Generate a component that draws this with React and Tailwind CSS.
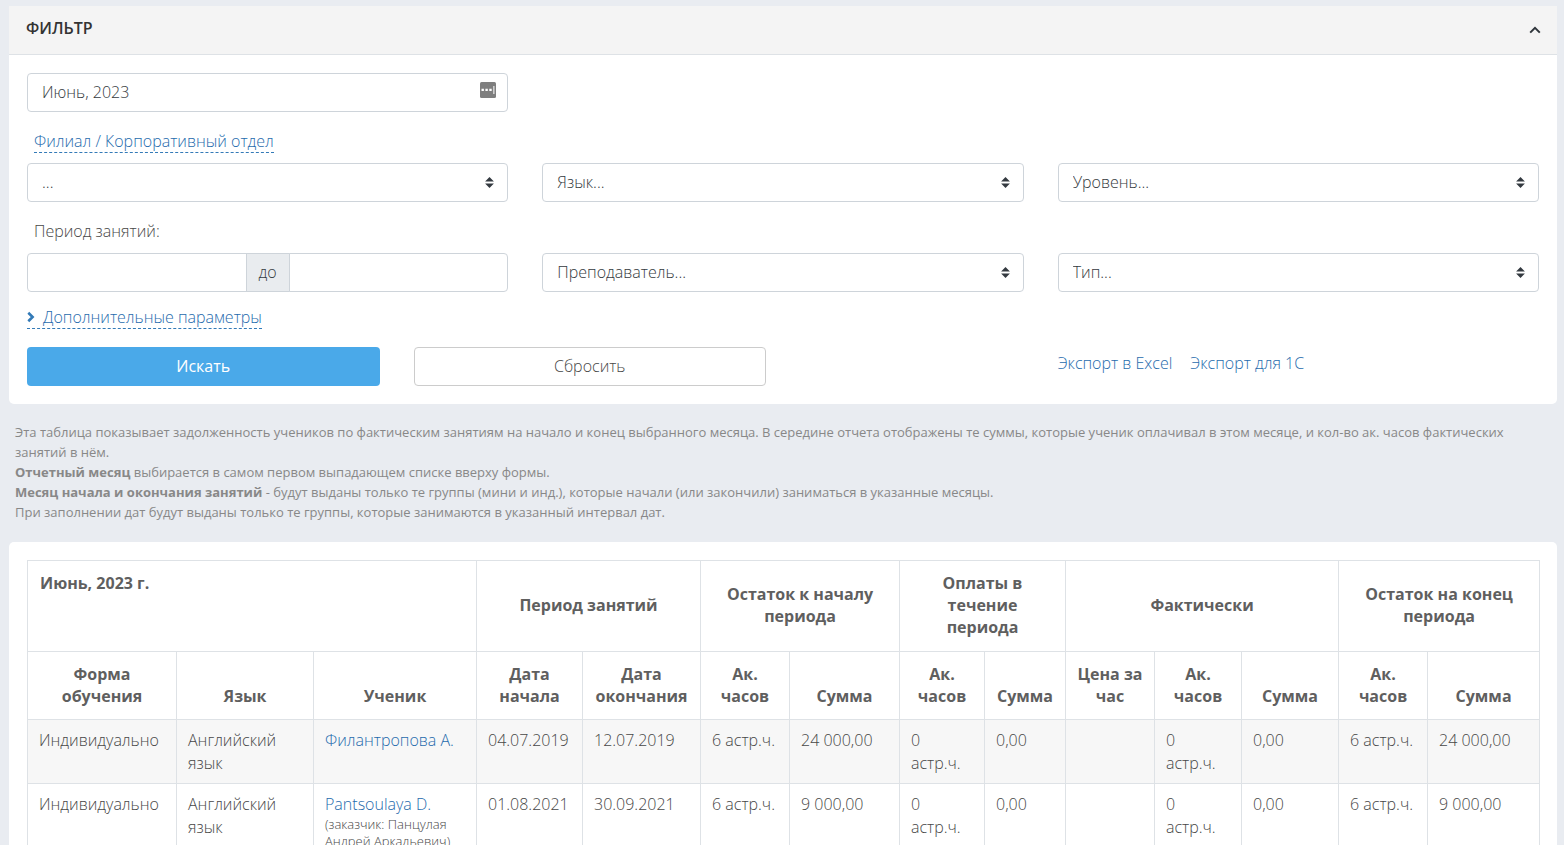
import { useState } from 'react';

const groups = [
  { title: 'Период занятий', span: 2 },
  { title: 'Остаток к началу периода', span: 2 },
  { title: 'Оплаты в течение периода', span: 2 },
  { title: 'Фактически', span: 3 },
  { title: 'Остаток на конец периода', span: 2 },
];

const columns = [
  { title: 'Форма обучения', width: 'w-[149px]' },
  { title: 'Язык', width: 'w-[137px]' },
  { title: 'Ученик', width: 'w-[163px]' },
  { title: 'Дата начала', width: 'w-[106px]' },
  { title: 'Дата окончания', width: 'w-[118px]' },
  { title: 'Ак. часов', width: 'w-[89px]' },
  { title: 'Сумма', width: 'w-[110px]' },
  { title: 'Ак. часов', width: 'w-[85px]' },
  { title: 'Сумма', width: 'w-[81px]' },
  { title: 'Цена за час', width: 'w-[89px]' },
  { title: 'Ак. часов', width: 'w-[87px]' },
  { title: 'Сумма', width: 'w-[97px]' },
  { title: 'Ак. часов', width: 'w-[89px]' },
  { title: 'Сумма', width: 'w-[112px]' },
];

const rows = [
  {
    student: 'Филантропова А.',
    values: ['04.07.2019', '12.07.2019', '6 астр.ч.', '24 000,00', '0 астр.ч.', '0,00', '', '0 астр.ч.', '0,00', '6 астр.ч.', '24 000,00'],
  },
  {
    student: 'Pantsoulaya D.',
    customer: '(заказчик: Панцулая Андрей Аркадьевич)',
    values: ['01.08.2021', '30.09.2021', '6 астр.ч.', '9 000,00', '0 астр.ч.', '0,00', '', '0 астр.ч.', '0,00', '6 астр.ч.', '9 000,00'],
  },
];

function SelectField({ label }) {
  return (
    <div className="relative">
      <select
        aria-label={label}
        className="block h-[39px] w-full appearance-none rounded border border-[#ced4da] bg-white px-3.5 pb-0.5 text-[#343a40]"
      >
        <option>{label}</option>
      </select>
      <svg className="pointer-events-none absolute top-[14px] right-3.5 h-[11px] w-[9px]" viewBox="0 0 4 5" aria-hidden="true">
        <path fill="#343a40" d="M2 0L0 2h4zm0 5L0 3h4z" />
      </svg>
    </div>
  );
}

function FilterPanel() {
  const [open, setOpen] = useState(true);

  return (
    <section className="rounded-b-[5px] bg-white">
      <header className="flex h-[49px] items-center justify-between border-b border-[#dee2e6] bg-[#f4f4f4] pr-3 pb-1 pl-[17px]">
        <h2 className="font-semibold text-[#333]">ФИЛЬТР</h2>
        <button type="button" aria-label="Свернуть фильтр" onClick={() => setOpen(!open)} className="p-1">
          <svg className="mt-1 h-2 w-3" viewBox="0 0 12 8" fill="none" stroke="#2f353b" strokeWidth="2" aria-hidden="true">
            <path d="M1.2 6.6L6 1.8l4.8 4.8" />
          </svg>
        </button>
      </header>

      {open && (
        <form className="p-[18px]" onSubmit={(e) => e.preventDefault()}>
          <div className="grid grid-cols-3 gap-x-[34px]">
            <div className="relative">
              <input
                aria-label="Отчетный месяц"
                defaultValue="Июнь, 2023"
                className="block h-[39px] w-full rounded border border-[#ced4da] bg-white px-3.5 pb-0.5 text-[#343a40]"
              />
              <svg className="absolute top-[9px] right-3 h-4 w-4" viewBox="0 0 16 16" aria-hidden="true">
                <rect width="16" height="16" rx="1.5" fill="#7f7f7f" />
                <path fill="#fff" d="M1.5 6.7h2.4v2.2H1.5zM5.4 6.7h2.4v2.2H5.4zM9.3 6.7h2.4v2.2H9.3z" />
                <path fill="#d0d0d0" d="M13 4h1.6v8H13z" />
              </svg>
            </div>

            <div className="col-span-3 flex h-[51px] items-center pt-2 pl-[7px]">
              <a href="#branch" className="border-b border-dashed border-[#337ab7] leading-[22px] text-[#1f6bad]">
                Филиал / Корпоративный отдел
              </a>
            </div>

            <SelectField label="..." />
            <SelectField label="Язык..." />
            <SelectField label="Уровень..." />

            <div className="col-span-3 flex h-[51px] items-center pt-1.5 pl-[7px]">
              <label htmlFor="date-from">Период занятий:</label>
            </div>

            <div className="flex h-[39px]">
              <input id="date-from" className="min-w-0 flex-1 rounded-l border border-[#ced4da] bg-white px-3.5" />
              <label htmlFor="date-to" className="-mx-px flex items-center border border-[#ced4da] bg-[#e9ecef] px-3 pb-0.5 text-[#343a40]">
                до
              </label>
              <input id="date-to" className="min-w-0 flex-1 rounded-r border border-[#ced4da] bg-white px-3.5" />
            </div>
            <SelectField label="Преподаватель..." />
            <SelectField label="Тип..." />
          </div>

          <div className="flex h-[55px] items-start pt-3.5">
            <a href="#more" className="flex items-center border-b border-dashed border-[#337ab7] leading-[22px] text-[#1f6bad]">
              <svg className="mr-2 h-3 w-2" viewBox="0 0 8 12" fill="none" stroke="#337ab7" strokeWidth="2.6" aria-hidden="true">
                <path d="M1.3 1.8L5.6 6l-4.3 4.2" />
              </svg>
              Дополнительные параметры
            </a>
          </div>

          <div className="grid grid-cols-12 gap-x-[34px]">
            <button type="submit" className="col-span-3 h-[39px] rounded bg-[#4aa9e9] pb-0.5 font-normal text-white">
              Искать
            </button>
            <button type="reset" className="col-span-3 h-[39px] rounded border border-[#ccc] bg-white pb-0.5">
              Сбросить
            </button>
            <div className="col-span-4 col-start-9 flex gap-[18px] pt-1 text-[#1f6bad]">
              <a href="#excel">Экспорт в Excel</a>
              <a href="#1c">Экспорт для 1С</a>
            </div>
          </div>
        </form>
      )}
    </section>
  );
}

function DebtTable() {
  return (
    <table className="w-full table-fixed border-collapse">
      <colgroup>
        {columns.map((c, i) => (
          <col key={i} className={c.width} />
        ))}
      </colgroup>
      <thead className="leading-[22px] text-[#5f5f5f]">
        <tr className="h-[91px]">
          <th colSpan={3} className="border border-[#dee2e6] px-3 py-[11px] text-left align-top font-bold">
            Июнь, 2023 г.
          </th>
          {groups.map((g) => (
            <th key={g.title} colSpan={g.span} className="border border-[#dee2e6] px-5 pt-[11px] pb-[13px] align-middle font-bold">
              {g.title}
            </th>
          ))}
        </tr>
        <tr>
          {columns.map((c, i) => (
            <th key={i} className="border border-[#dee2e6] px-2.5 pt-[11px] pb-3 align-bottom font-bold">
              {c.title}
            </th>
          ))}
        </tr>
      </thead>
      <tbody className="leading-[23px]">
        {rows.map((r) => (
          <tr key={r.student} className="align-top odd:bg-[#f7f7f7]">
            <td className="border border-[#dee2e6] pt-[9px] pb-2 pl-[11px]">Индивидуально</td>
            <td className="border border-[#dee2e6] px-[11px] pt-[9px] pb-2">Английский язык</td>
            <td className="border border-[#dee2e6] px-[11px] pt-[9px] pb-2">
              <a href="#student" className="text-[#1f6bad]">{r.student}</a>
              {r.customer && <div className="text-[13px] leading-[17px]">{r.customer}</div>}
            </td>
            {r.values.map((v, i) => (
              <td key={i} className="border border-[#dee2e6] pt-[9px] pr-[13px] pb-2 pl-[11px]">{v}</td>
            ))}
          </tr>
        ))}
      </tbody>
    </table>
  );
}

export default function App() {
  return (
    <div className="min-h-screen bg-[#e9ecf1] pt-1.5 pr-[7px] pl-[9px] font-['Open_Sans',sans-serif] text-base font-light text-[#474747]">
      <FilterPanel />

      <div className="px-1.5 pt-[18px] pb-5 text-[13px] leading-5 font-normal text-[#888]">
        <p>
          Эта таблица показывает задолженность учеников по фактическим занятиям на начало и конец выбранного месяца. В
          середине отчета отображены те суммы, которые ученик оплачивал в этом месяце, и кол-во ак. часов фактических
          занятий в нём.
        </p>
        <p><b>Отчетный месяц</b> выбирается в самом первом выпадающем списке вверху формы.</p>
        <p>
          <b>Месяц начала и окончания занятий</b> - будут выданы только те группы (мини и инд.), которые начали (или
          закончили) заниматься в указанные месяцы.
        </p>
        <p>При заполнении дат будут выданы только те группы, которые занимаются в указанный интервал дат.</p>
      </div>

      <section className="rounded-t-[5px] bg-white p-[18px]">
        <DebtTable />
      </section>
    </div>
  );
}
